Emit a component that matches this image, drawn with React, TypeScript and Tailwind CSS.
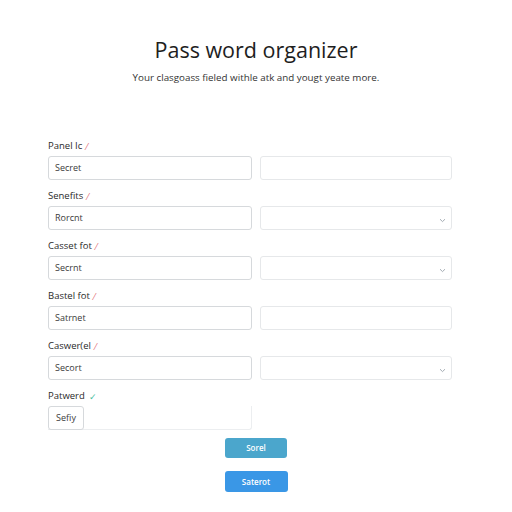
import React from 'react';

type Row = {
  label: string;
  mark: 'req' | 'ok';
  value: string;
  select?: boolean;
};

const rows: Row[] = [
  { label: 'Panel Ic', mark: 'req', value: 'Secret' },
  { label: 'Senefits', mark: 'req', value: 'Rorcnt', select: true },
  { label: 'Casset fot', mark: 'req', value: 'Secrnt', select: true },
  { label: 'Bastel fot', mark: 'req', value: 'Satrnet' },
  { label: 'Caswer(el', mark: 'req', value: 'Secort', select: true },
];

const Chevron = () => (
  <svg width="7" height="5" viewBox="0 0 7 5" className="absolute right-[5px] bottom-[6px]">
    <path d="M1 1.2 L3.5 3.6 L6 1.2" fill="none" stroke="#9aa3ab" strokeWidth="0.9" />
  </svg>
);

const Label = ({ text, mark }: { text: string; mark: 'req' | 'ok' }) => (
  <div className="h-[14px] flex items-center gap-[4px] text-[9.5px] text-[#2a2a2a]">
    <span>{text}</span>
    {mark === 'req' ? (
      <span className="text-[9px] text-[#e0646a] leading-none">⁄</span>
    ) : (
      <span className="text-[9px] text-[#4cc0a0] leading-none">✓</span>
    )}
  </div>
);

export default function App() {
  return (
    <div
      className="w-[512px] h-[512px] bg-white overflow-hidden"
      style={{ fontFamily: '"Open Sans", "Noto Sans", sans-serif' }}
    >
      <div className="pt-[36px] flex flex-col items-center">
        <h1 className="text-[21.5px] leading-[28px] text-[#1e1e1e]">Pass word organizer</h1>
        <p className="mt-[7px] text-[9.8px] leading-[14px] text-[#333]">
          Your clasgoass fieled withle atk and yougt yeate more.
        </p>
      </div>

      <div className="mt-[54px] pl-[48px] pr-[60px] flex flex-col gap-[9px]">
        {rows.map((r) => (
          <div key={r.label}>
            <Label text={r.label} mark={r.mark} />
            <div className="mt-[3px] flex gap-[8px]">
              <div className="w-[204px] h-[24px] border border-[#d6d9dc] rounded-[3px] px-[6px] flex items-center text-[9px] text-[#3a3a3a]">
                {r.value}
              </div>
              <div className="relative flex-1 h-[24px] border border-[#e6e8ea] rounded-[3px]">
                {r.select && <Chevron />}
              </div>
            </div>
          </div>
        ))}

        <div>
          <Label text="Patwerd" mark="ok" />
          <div className="mt-[3px] flex">
            <div className="w-[204px] h-[24px] flex border-b border-r border-[#eceef0] rounded-br-[3px]">
              <div className="w-[36px] h-[24px] border border-[#d6d9dc] rounded-[3px] flex items-center justify-center text-[9px] text-[#3a3a3a]">
                Sefiy
              </div>
            </div>
          </div>
        </div>
      </div>

      <div className="mt-[8px] flex flex-col items-center gap-[13px]">
        <button className="w-[62px] h-[20px] rounded-[3px] bg-[#4ba6cc] text-white text-[8px] font-semibold">
          Sorel
        </button>
        <button className="w-[63px] h-[21px] rounded-[3px] bg-[#3a97e6] text-white text-[8px] font-semibold">
          Saterot
        </button>
      </div>
    </div>
  );
}
